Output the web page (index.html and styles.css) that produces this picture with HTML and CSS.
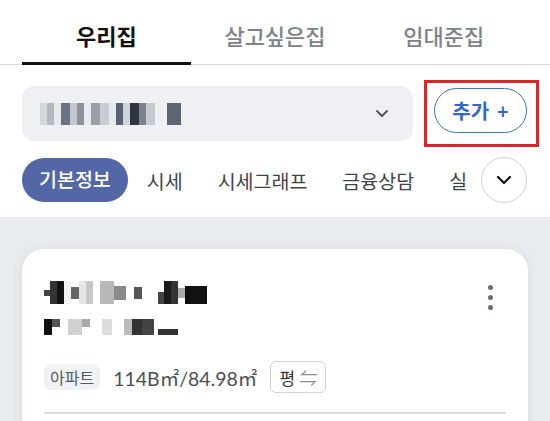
FILE: index.html
```html
<!DOCTYPE html>
<html lang="ko">
<head>
    <meta charset="UTF-8">
    <meta name="viewport" content="width=device-width, initial-scale=1.0">
    <title>우리집</title>
    <link rel="stylesheet" href="styles.css">
</head>
<body>
    <div class="tabs">
        <div class="tab activo">우리집</div>
        <div class="tab">살고싶은집</div>
        <div class="tab">임대준집</div>
    </div>

    <div class="fila-casa">
        <div class="selector">
            <div class="mosaico mosaico-sel">
                <span class="c" style="width:7px;background:#d3d6db"></span>
                <span class="c" style="width:7px;background:#b4b9c1"></span>
                <span class="c" style="width:7px;background:#e6e8eb"></span>
                <span class="c" style="width:9px;background:#6b7280"></span>
                <span class="c" style="width:7px;background:#c2c6cd"></span>
                <span class="c" style="width:7px;background:#8c929c"></span>
                <span class="c" style="width:7px;background:#e9ebee"></span>
                <span class="c" style="width:9px;background:#9aa0a9"></span>
                <span class="c" style="width:9px;background:#c9cdd3"></span>
                <span class="c" style="width:7px;background:#e6e8eb"></span>
                <span class="c" style="width:7px;background:#5a6170"></span>
                <span class="c" style="width:7px;background:#d0d4d9"></span>
                <span class="c" style="width:9px;background:#2f3542"></span>
                <span class="c" style="width:7px;background:#7d838e"></span>
                <span class="c" style="width:9px;background:#c6cad0"></span>
                <span class="c" style="width:12px;background:#eef0f3"></span>
                <span class="c" style="width:14px;background:#5d6472"></span>
                <span class="c" style="width:20px;background:#eef0f3"></span>
            </div>
            <svg class="flecha" width="14" height="9" viewBox="0 0 14 9"><path d="M2 2l5 5 5-5" fill="none" stroke="#4a4f58" stroke-width="1.8" stroke-linecap="round" stroke-linejoin="round"/></svg>
        </div>
        <div class="marca">
            <button class="agregar">추가 +</button>
        </div>
    </div>

    <div class="chips">
        <span class="chip activo">기본정보</span>
        <span class="chip">시세</span>
        <span class="chip">시세그래프</span>
        <span class="chip">금융상담</span>
        <span class="chip ultimo">실</span>
        <button class="mas">
            <svg width="16" height="10" viewBox="0 0 16 10"><path d="M2 2l6 6 6-6" fill="none" stroke="#111" stroke-width="2.2" stroke-linecap="round" stroke-linejoin="round"/></svg>
        </button>
    </div>

    <div class="contenido">
        <div class="tarjeta">
            <div class="cabecera">
                <div>
                    <div class="mosaico mosaico-titulo">
                        <span class="c" style="width:6px;height:6px;align-self:center;background:#444"></span>
                        <span class="c" style="width:7px;background:#333"></span>
                        <span class="c" style="width:7px;background:#111"></span>
                        <span class="c" style="width:7px;background:#f2f2f2"></span>
                        <span class="c" style="width:8px;height:12px;align-self:center;background:#666"></span>
                        <span class="c" style="width:7px;background:#e6e6e6"></span>
                        <span class="c" style="width:7px;background:#c8c8c8"></span>
                        <span class="c" style="width:7px;background:#fff"></span>
                        <span class="c" style="width:14px;background:#b8b8b8"></span>
                        <span class="c" style="width:12px;height:14px;align-self:center;background:#8a8a8a"></span>
                        <span class="c" style="width:8px;background:#fff"></span>
                        <span class="c" style="width:8px;height:12px;align-self:center;background:#555"></span>
                        <span class="c" style="width:16px;background:#fff"></span>
                        <span class="c" style="width:6px;height:12px;align-self:flex-end;background:#444"></span>
                        <span class="c" style="width:7px;background:#1a1a1a"></span>
                        <span class="c" style="width:7px;background:#333"></span>
                        <span class="c" style="width:7px;height:10px;align-self:center;background:#aaa"></span>
                        <span class="c" style="width:22px;height:18px;align-self:flex-end;background:#111"></span>
                    </div>
                    <div class="mosaico mosaico-sub">
                        <span class="c" style="width:8px;background:#111"></span>
                        <span class="c" style="width:8px;height:8px;background:#555"></span>
                        <span class="c" style="width:8px;background:#fff"></span>
                        <span class="c" style="width:14px;background:#d0d0d0"></span>
                        <span class="c" style="width:8px;height:8px;background:#aaa"></span>
                        <span class="c" style="width:12px;background:#fff"></span>
                        <span class="c" style="width:10px;background:#ddd"></span>
                        <span class="c" style="width:12px;background:#fff"></span>
                        <span class="c" style="width:8px;background:#bbb"></span>
                        <span class="c" style="width:10px;background:#333"></span>
                        <span class="c" style="width:12px;background:#444"></span>
                        <span class="c" style="width:4px;background:#fff"></span>
                        <span class="c" style="width:20px;height:6px;align-self:flex-end;background:#333"></span>
                    </div>
                </div>
                <div class="puntos"><span></span><span></span><span></span></div>
            </div>
            <div class="datos">
                <span class="etiqueta">아파트</span>
                <span class="area">114B㎡/84.98㎡</span>
                <button class="unidad">평 <span class="cambio">⇋</span></button>
            </div>
            <div class="linea"></div>
        </div>
    </div>
</body>
</html>
```

FILE: styles.css
```css
body {
    margin: 0;
    background-color: #fff;
    font-family: Lato, "Noto Sans CJK KR", sans-serif;
    color: #222;
    overflow: hidden;
}
.tabs {
    display: grid;
    grid-template-columns: repeat(3, 1fr);
    padding: 0 22px;
    border-bottom: 1px solid #d6d9de;
}
.tab {
    height: 50px;
    padding-top: 12px;
    border-bottom: 3px solid transparent;
    margin-bottom: -1px;
    text-align: center;
    font-size: 22px;
    font-weight: 500;
    line-height: 50px;
    color: #7d828b;
}
.tab.activo {
    color: #111;
    font-weight: 700;
    border-bottom-color: #111;
}
.fila-casa {
    display: flex;
    align-items: center;
    gap: 11px;
    padding: 15px 11px 0 22px;
}
.selector {
    flex: 1;
    height: 55px;
    background-color: #eef0f3;
    border-radius: 12px;
    display: flex;
    align-items: center;
    justify-content: space-between;
    padding: 0 24px 0 18px;
}
.mosaico {
    display: flex;
    align-items: stretch;
}
.mosaico .c {
    display: block;
}
.mosaico-sel {
    height: 22px;
}
.marca {
    border: 3px solid #d9262b;
    padding: 5px 9px 11px 7px;
}
.agregar {
    width: 93px;
    height: 45px;
    border: 1.5px solid #3d6fd6;
    border-radius: 23px;
    background-color: #fff;
    color: #3566d0;
    font-family: Lato, "Noto Sans CJK KR", sans-serif;
    font-size: 20px;
    font-weight: 700;
    word-spacing: 3px;
    padding: 0;
    cursor: pointer;
}
.chips {
    display: flex;
    align-items: center;
    padding: 10px 23px 14px 22px;
    height: 46px;
}
.chip {
    font-size: 19.5px;
    color: #3e434b;
    margin-right: 35px;
    white-space: nowrap;
}
.chip.activo {
    background-color: #5367a7;
    color: #fff;
    font-weight: 500;
    height: 44px;
    line-height: 44px;
    padding: 0 17px;
    border-radius: 22px;
    margin-right: 19px;
}
.chip.ultimo {
    margin-right: 0;
}
.mas {
    margin-left: auto;
    width: 46px;
    height: 46px;
    border-radius: 50%;
    border: 1px solid #cfd1d5;
    background-color: #fff;
    display: flex;
    align-items: center;
    justify-content: center;
    padding: 0;
}
.contenido {
    background-color: #e9ecef;
    padding: 32px 22px 0 22px;
    height: 300px;
}
.tarjeta {
    background-color: #fff;
    border-radius: 22px;
    box-shadow: 0 0 12px rgba(0,0,0,0.07);
    padding: 32px 22px 0 22px;
    height: 300px;
}
.cabecera {
    display: flex;
    justify-content: space-between;
}
.mosaico-titulo {
    height: 23px;
}
.mosaico-sub {
    height: 16px;
    margin-top: 15px;
}
.puntos {
    display: flex;
    flex-direction: column;
    gap: 5px;
    padding: 4px 13px 0 0;
}
.puntos span {
    width: 5px;
    height: 5px;
    border-radius: 50%;
    background-color: #686d77;
}
.datos {
    display: flex;
    align-items: center;
    margin-top: 26px;
}
.etiqueta {
    background-color: #f0f2f5;
    color: #555a62;
    font-size: 16px;
    padding: 1px 6px;
    border-radius: 6px;
}
.area {
    font-size: 19.5px;
    color: #4a4f57;
    margin-left: 13px;
}
.unidad {
    margin-left: 13px;
    height: 32px;
    padding: 0 8px;
    border: 1px solid #cfd1d5;
    border-radius: 6px;
    background-color: #fff;
    font-family: Lato, "Noto Sans CJK KR", sans-serif;
    font-size: 17px;
    color: #333;
}
.cambio {
    color: #8a8f97;
    font-size: 18px;
}
.linea {
    margin-top: 19px;
    height: 2px;
    background-color: #dcdee2;
}
```
